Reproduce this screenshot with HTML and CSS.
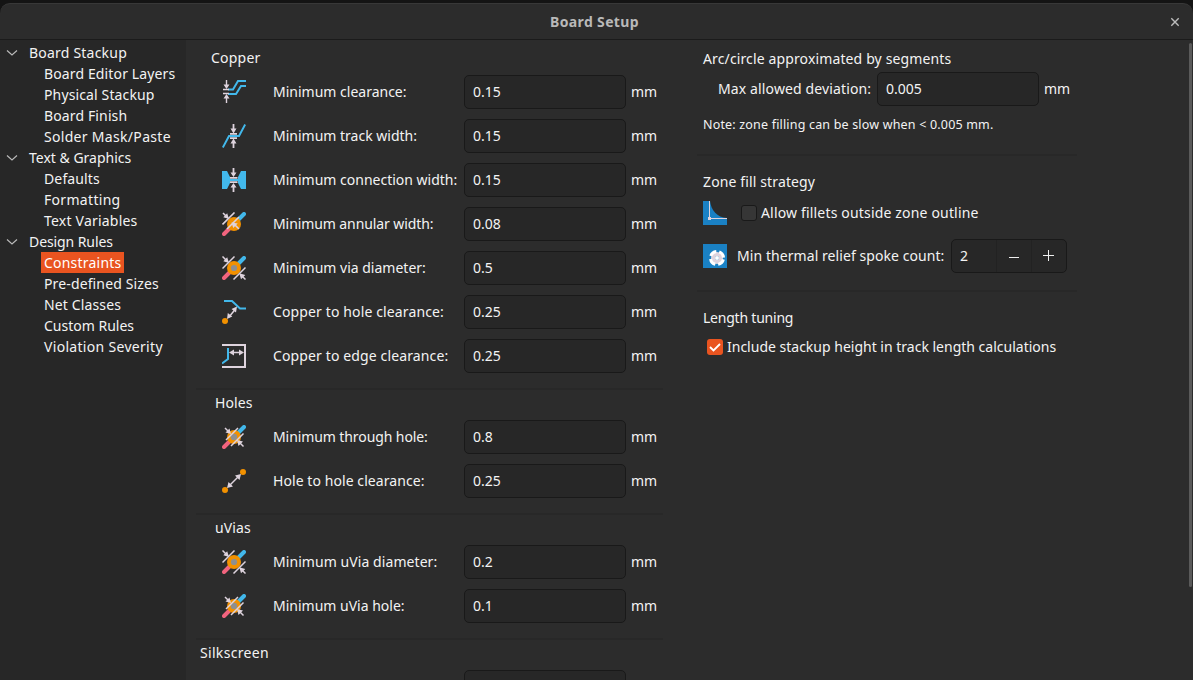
FILE: index.html
```html
<!DOCTYPE html>
<html lang="en">
<head>
<meta charset="utf-8">
<title>Board Setup</title>
<link rel="stylesheet" href="styles.css">
</head>
<body>
<svg class="defs" width="0" height="0">
  <defs>
    <symbol id="clearance" viewBox="0 0 24 24"><path d="M6 9.500h5l5-8.500h8M6 14h8l5-8h5" fill="none" stroke="#42b8eb" stroke-width="2"/><path d="M1 9.500h6M1 13.500h6M4.500 0v5M4.500 18v5" stroke="#ded3dd" stroke-width="1.400"/><path d="M1.500 4.500h6l-3 4.500zM1.500 18.500h6l-3-4.500z" fill="#ded3dd"/></symbol>
    <symbol id="track" viewBox="0 0 24 24"><path d="M.8 23.500l6.200-11.500h10l6.200-11.500" fill="none" stroke="#42b8eb" stroke-width="2"/><path d="M8 9.900h7M8 14.100h7M11.500 0v5M11.500 19v5" stroke="#ded3dd" stroke-width="1.800"/><path d="M8.500 4.500h6l-3 5zM8.500 19.500h6l-3-5z" fill="#ded3dd"/></symbol>
    <symbol id="connection" viewBox="0 0 24 24"><path d="M0 3h5l3 6v6l-3 6h-5zM24 3h-5l-3 6v6l3 6h5zM8 11h8v2h-8z" fill="#42b8eb"/><path d="M8 9.800h7.500M8 14.200h7.500M11.500 0v5M11.500 19v5" stroke="#ded3dd" stroke-width="1.800"/><path d="M8.500 4.500h6l-3 4.500zM8.500 19.500h6l-3-4.500z" fill="#ded3dd"/></symbol>
    <symbol id="annular" viewBox="0 0 24 24"><path d="M2 22l7-7" stroke="#f2647e" stroke-width="4" stroke-linecap="round"/><path d="M16 8l6-6" stroke="#42b8eb" stroke-width="4" stroke-linecap="round"/><circle cx="12" cy="12" r="7" fill="#f29100"/><path d="M.5 12.500L12.500.5M5 17L17 5M1 1l4 4M12 12l5 5" stroke="#ded3dd" stroke-width="1.600"/><path d="M7 7L1.300 5.200 5.200 1.300zM9.500 10.500l6.200 1-4.500 4.500z" fill="#ded3dd"/></symbol>
    <symbol id="via" viewBox="0 0 24 24"><path d="M2 22l7-7" stroke="#f2647e" stroke-width="4" stroke-linecap="round"/><path d="M16 8l6-6" stroke="#42b8eb" stroke-width="4" stroke-linecap="round"/><circle cx="12" cy="12" r="7" fill="#f29100"/><circle cx="12" cy="12" r="3.100" fill="#8f8f8f"/><path d="M.5 12.500L12.500.5M11.500 23.500L23.500 11.500M.5.5l4 4M19.500 19.500l4 4" stroke="#ded3dd" stroke-width="1.500"/><path d="M7 7L1.300 5.200 5.200 1.300zM17.300 17.300l6 1.700-4.300 4.300z" fill="#ded3dd"/></symbol>
    <symbol id="drill" viewBox="0 0 24 24"><path d="M2 22l6-6" stroke="#f2647e" stroke-width="4" stroke-linecap="round"/><path d="M16 8l6-6" stroke="#42b8eb" stroke-width="4" stroke-linecap="round"/><circle cx="12" cy="12" r="7" fill="#f29100"/><circle cx="12" cy="12" r="3.200" fill="#8f8f8f"/><path d="M4 15L16 3M9 21L21.500 8.500M3 3l4 4M17.500 17.500l4 4" stroke="#ded3dd" stroke-width="1.500"/><path d="M9 9L3.500 7.500 7.500 3.500zM15 15l6 1.500-4.500 4.500z" fill="#ded3dd"/></symbol>
    <symbol id="hole" viewBox="0 0 24 24"><path d="M2 1h8l8 7.500h6" fill="none" stroke="#42b8eb" stroke-width="2"/><circle cx="3" cy="21" r="3" fill="#f29100"/><path d="M7 17l6.500-8" stroke="#ded3dd" stroke-width="1.600"/><path d="M15 6.500l-1 6-4.500-3.500zM5 19l.8-6 4.500 3.600z" fill="#ded3dd"/></symbol>
    <symbol id="edge" viewBox="0 0 24 24"><path d="M0 1h23v22h-23" fill="none" stroke="#ded3dd" stroke-width="2"/><path d="M6 4v11L0 19.500" fill="none" stroke="#42b8eb" stroke-width="2"/><path d="M10 8.500h9" stroke="#ded3dd" stroke-width="1.500"/><path d="M7 8.500l5-3v6zM22 8.500l-5-3v6z" fill="#ded3dd"/></symbol>
    <symbol id="holes" viewBox="0 0 24 24"><circle cx="3" cy="21" r="3" fill="#f29100"/><circle cx="21" cy="3" r="3" fill="#f29100"/><path d="M7 17L17 7" stroke="#ded3dd" stroke-width="1.500"/><path d="M19 5l-1.500 6-4.500-4.500zM5 19l1.500-6 4.500 4.500z" fill="#ded3dd"/></symbol>
    <symbol id="chevron" viewBox="0 0 12 8"><path d="M1 1.500l5 4.500 5-4.500" fill="none" stroke="#b8b8b8" stroke-width="1.200"/></symbol>
  </defs>
</svg>
<div class="window">
  <header class="titlebar"><span></span><h1>Board Setup</h1>
    <svg class="close" width="10" height="10" viewBox="0 0 10 10"><path d="M1.300 1.300l7.400 7.400M8.700 1.300l-7.400 7.400" stroke="#bcbcbc" stroke-width="1.400"/></svg>
  </header>
  <div class="body">
    <nav class="tree">
      <div class="group"><svg width="12" height="8"><use href="#chevron"/></svg><span class="wide">Board Stackup</span></div>
      <div class="leaf"><span class="open">Board Editor Layers</span></div>
      <div class="leaf"><span class="open">Physical Stackup</span></div>
      <div class="leaf"><span class="open">Board Finish</span></div>
      <div class="leaf"><span class="wider">Solder Mask/Paste</span></div>
      <div class="group"><svg width="12" height="8"><use href="#chevron"/></svg><span>Text &amp; Graphics</span></div>
      <div class="leaf"><span class="open">Defaults</span></div>
      <div class="leaf"><span class="wider">Formatting</span></div>
      <div class="leaf"><span class="wide">Text Variables</span></div>
      <div class="group"><svg width="12" height="8"><use href="#chevron"/></svg><span class="tight">Design Rules</span></div>
      <div class="leaf selected"><span class="wide">Constraints</span></div>
      <div class="leaf"><span class="open">Pre-defined Sizes</span></div>
      <div class="leaf"><span class="open">Net Classes</span></div>
      <div class="leaf"><span>Custom Rules</span></div>
      <div class="leaf"><span class="wider">Violation Severity</span></div>
    </nav>
    <main class="page">
      <div class="constraints">
        <section class="copper">
          <h2 class="wide">Copper</h2>
          <div class="row"><svg class="icon"><use href="#clearance"/></svg><label>Minimum clearance:</label><div class="field">0.15</div><span>mm</span></div>
          <div class="row"><svg class="icon"><use href="#track"/></svg><label>Minimum track width:</label><div class="field">0.15</div><span>mm</span></div>
          <div class="row"><svg class="icon"><use href="#connection"/></svg><label>Minimum connection width:</label><div class="field">0.15</div><span>mm</span></div>
          <div class="row"><svg class="icon"><use href="#annular"/></svg><label class="tight">Minimum annular width:</label><div class="field">0.08</div><span>mm</span></div>
          <div class="row"><svg class="icon"><use href="#via"/></svg><label>Minimum via diameter:</label><div class="field">0.5</div><span>mm</span></div>
          <div class="row"><svg class="icon"><use href="#hole"/></svg><label class="open">Copper to hole clearance:</label><div class="field">0.25</div><span>mm</span></div>
          <div class="row"><svg class="icon"><use href="#edge"/></svg><label class="open">Copper to edge clearance:</label><div class="field">0.25</div><span>mm</span></div>
        </section>
        <section>
          <h2 class="open">Holes</h2>
          <div class="row"><svg class="icon"><use href="#drill"/></svg><label class="tight">Minimum through hole:</label><div class="field">0.8</div><span>mm</span></div>
          <div class="row"><svg class="icon"><use href="#holes"/></svg><label class="slight">Hole to hole clearance:</label><div class="field">0.25</div><span>mm</span></div>
        </section>
        <section>
          <h2 class="open">uVias</h2>
          <div class="row"><svg class="icon"><use href="#via"/></svg><label class="slight">Minimum uVia diameter:</label><div class="field">0.2</div><span>mm</span></div>
          <div class="row"><svg class="icon"><use href="#drill"/></svg><label>Minimum uVia hole:</label><div class="field">0.1</div><span>mm</span></div>
        </section>
        <section class="silk">
          <h2 class="wider">Silkscreen</h2>
          <div class="row"><i></i><label></label><div class="field"></div></div>
        </section>
      </div>
      <div class="options">
        <section class="arc">
          <h2 class="open">Arc/circle approximated by segments</h2>
          <div class="line deviation"><label class="open">Max allowed deviation:</label><div class="field">0.005</div><span>mm</span></div>
          <p>Note: zone filling can be slow when &lt; 0.005 mm.</p>
        </section>
        <section class="zone">
          <h2 class="open">Zone fill strategy</h2>
          <div class="line fillets">
            <svg class="icon" viewBox="0 0 24 24"><path d="M0 0h24v24H0z" fill="#1a81c4"/><path d="M7 0C8 9 14 16.500 24 17V0z" fill="#2c2c2c"/><path d="M6.500 0v17.500H24" fill="none" stroke="#ded3dd"/><path d="M5 16h3v3H5z" fill="#ded3dd"/></svg>
            <i class="check"></i><label class="fillet-label">Allow fillets outside zone outline</label>
          </div>
          <div class="line spokes">
            <svg class="icon" viewBox="0 0 24 24"><path d="M0 0h24v24H0z" fill="#1a81c4"/><circle cx="14" cy="14" r="4" fill="none" stroke="#ded3dd" stroke-width="4"/><circle cx="14" cy="14" r="6.500" fill="none" stroke="#fff" stroke-width="3" stroke-dasharray="7.210 3" stroke-dashoffset="-1.500"/><circle cx="14" cy="14" r="2" fill="#fff"/></svg>
            <label class="slight">Min thermal relief spoke count:</label>
            <div class="spinner"><span>2</span><b><svg width="11" height="11"><path d="M0 6.500h10" stroke="#eee"/></svg></b><b><svg class="plus" width="11" height="11"><path d="M0 5.500h11M5.500 0v11" stroke="#eee"/></svg></b></div>
          </div>
        </section>
        <section class="length">
          <h2 class="tighter">Length tuning</h2>
          <div class="line"><i class="check on"><svg width="16" height="16"><path d="M3 8l3.500 3.500L13 5" fill="none" stroke="#fff" stroke-width="1.800"/></svg></i><label>Include stackup height in track length calculations</label></div>
        </section>
      </div>
      <div class="scrollbar"></div>
    </main>
  </div>
</div>
</body>
</html>
```
FILE: styles.css
```css
* { box-sizing: border-box; }
body { margin: 0; height: 680px; padding-top: 3px; overflow: hidden; background: #141414; color: #f3f3f3; font: 14px/20px "Noto Sans", sans-serif; white-space: nowrap; }
.defs { display: none; }
h1, h2, p { margin: 0; font-size: inherit; font-weight: 400; }
.tighter { letter-spacing: -.22px; }
.tight { letter-spacing: -.09px; }
.slight { letter-spacing: .07px; }
.open { letter-spacing: .13px; }
.fillet-label { letter-spacing: .17px; }
.wide { letter-spacing: .21px; }
.wider { letter-spacing: .31px; }
.window { height: 677px; border-top: 1px solid #383838; border-radius: 10px 10px 0 0; background: #2c2c2c; overflow: hidden; display: flex; flex-direction: column; }
.titlebar { height: 36px; flex: none; border-bottom: 1px solid #1b1b1b; display: grid; grid-template-columns: 1fr auto 1fr; align-items: center; padding: 1px 13px 0 9px; }
.titlebar h1 { font-weight: 700; color: #b9b9b9; letter-spacing: .35px; }
.close { justify-self: end; }
.body { flex: 1; display: flex; min-height: 0; }
.tree { width: 186px; flex: none; background: #272727; padding-top: 2px; }
.group, .leaf { height: 21px; display: flex; align-items: center; }
.group svg { margin: 0 11px 0 6px; }
.leaf { padding-left: 41px; }
.leaf span { padding: 0 3px; line-height: 21px; }
.selected span { background: #e95420; color: #fff; }
.page { flex: 1; display: flex; min-width: 0; overflow: hidden; }
.constraints { width: 467px; margin-left: 10px; flex: none; }
.constraints section { border-bottom: 2px solid #282828; padding-bottom: 15px; }
.constraints h2 { height: 30px; padding: 3px 0 0 19px; }
.constraints .copper h2 { height: 35px; padding: 8px 0 0 15px; }
.constraints .silk h2 { padding-left: 4px; }
.row { display: grid; grid-template-columns: 24px 218px 162px auto; align-items: center; padding-left: 26px; }
.row + .row { margin-top: 10px; }
.row label { padding-left: 27px; }
.row > span, .deviation > span { padding-left: 5px; letter-spacing: -.2px; }
.icon { width: 24px; height: 24px; display: block; flex: none; }
.field { height: 34px; width: 162px; border: 1px solid #191919; border-radius: 5px; background: #272727; padding: 6px 8px; }
.options { width: 380px; margin-left: 34px; flex: none; }
.options section { border-bottom: 2px solid #282828; padding-left: 6px; }
.line { display: flex; align-items: center; }
.arc { height: 116px; padding-top: 9px; }
.deviation { margin-top: 3px; padding-left: 15px; }
.deviation label { width: 159px; }
.arc p { margin-top: 9px; font-size: 12.5px; letter-spacing: .18px; }
.zone { height: 136px; padding-top: 16px; }
.fillets { margin-top: 9px; }
.fillets .check { margin: 0 4px 0 14px; }
.spokes { margin-top: 14px; }
.spokes label { margin-left: 10px; width: 214px; }
.options .length { border: 0; padding-top: 16px; }
.length .line { margin-top: 9px; padding-left: 4px; }
.length .check { margin-right: 4px; }
.check { width: 16px; height: 16px; border: 1px solid #191919; border-radius: 3px; background: #363636; }
.check.on { background: #e95420; border: 0; }
.check svg { display: block; }
.spinner { width: 116px; height: 34px; border: 1px solid #191919; border-radius: 5px; background: #272727; display: grid; grid-template-columns: 44px 35px 35px; }
.spinner span { padding: 6px 8px; }
.spinner b { border-left: 1px solid #222; display: grid; place-items: center; }
.plus { margin: 0 2px 1px 0; }
.scrollbar { margin: 3px 1px 0 auto; width: 3px; height: 544px; border-radius: 2px; background: #5a5a5a; }
```
